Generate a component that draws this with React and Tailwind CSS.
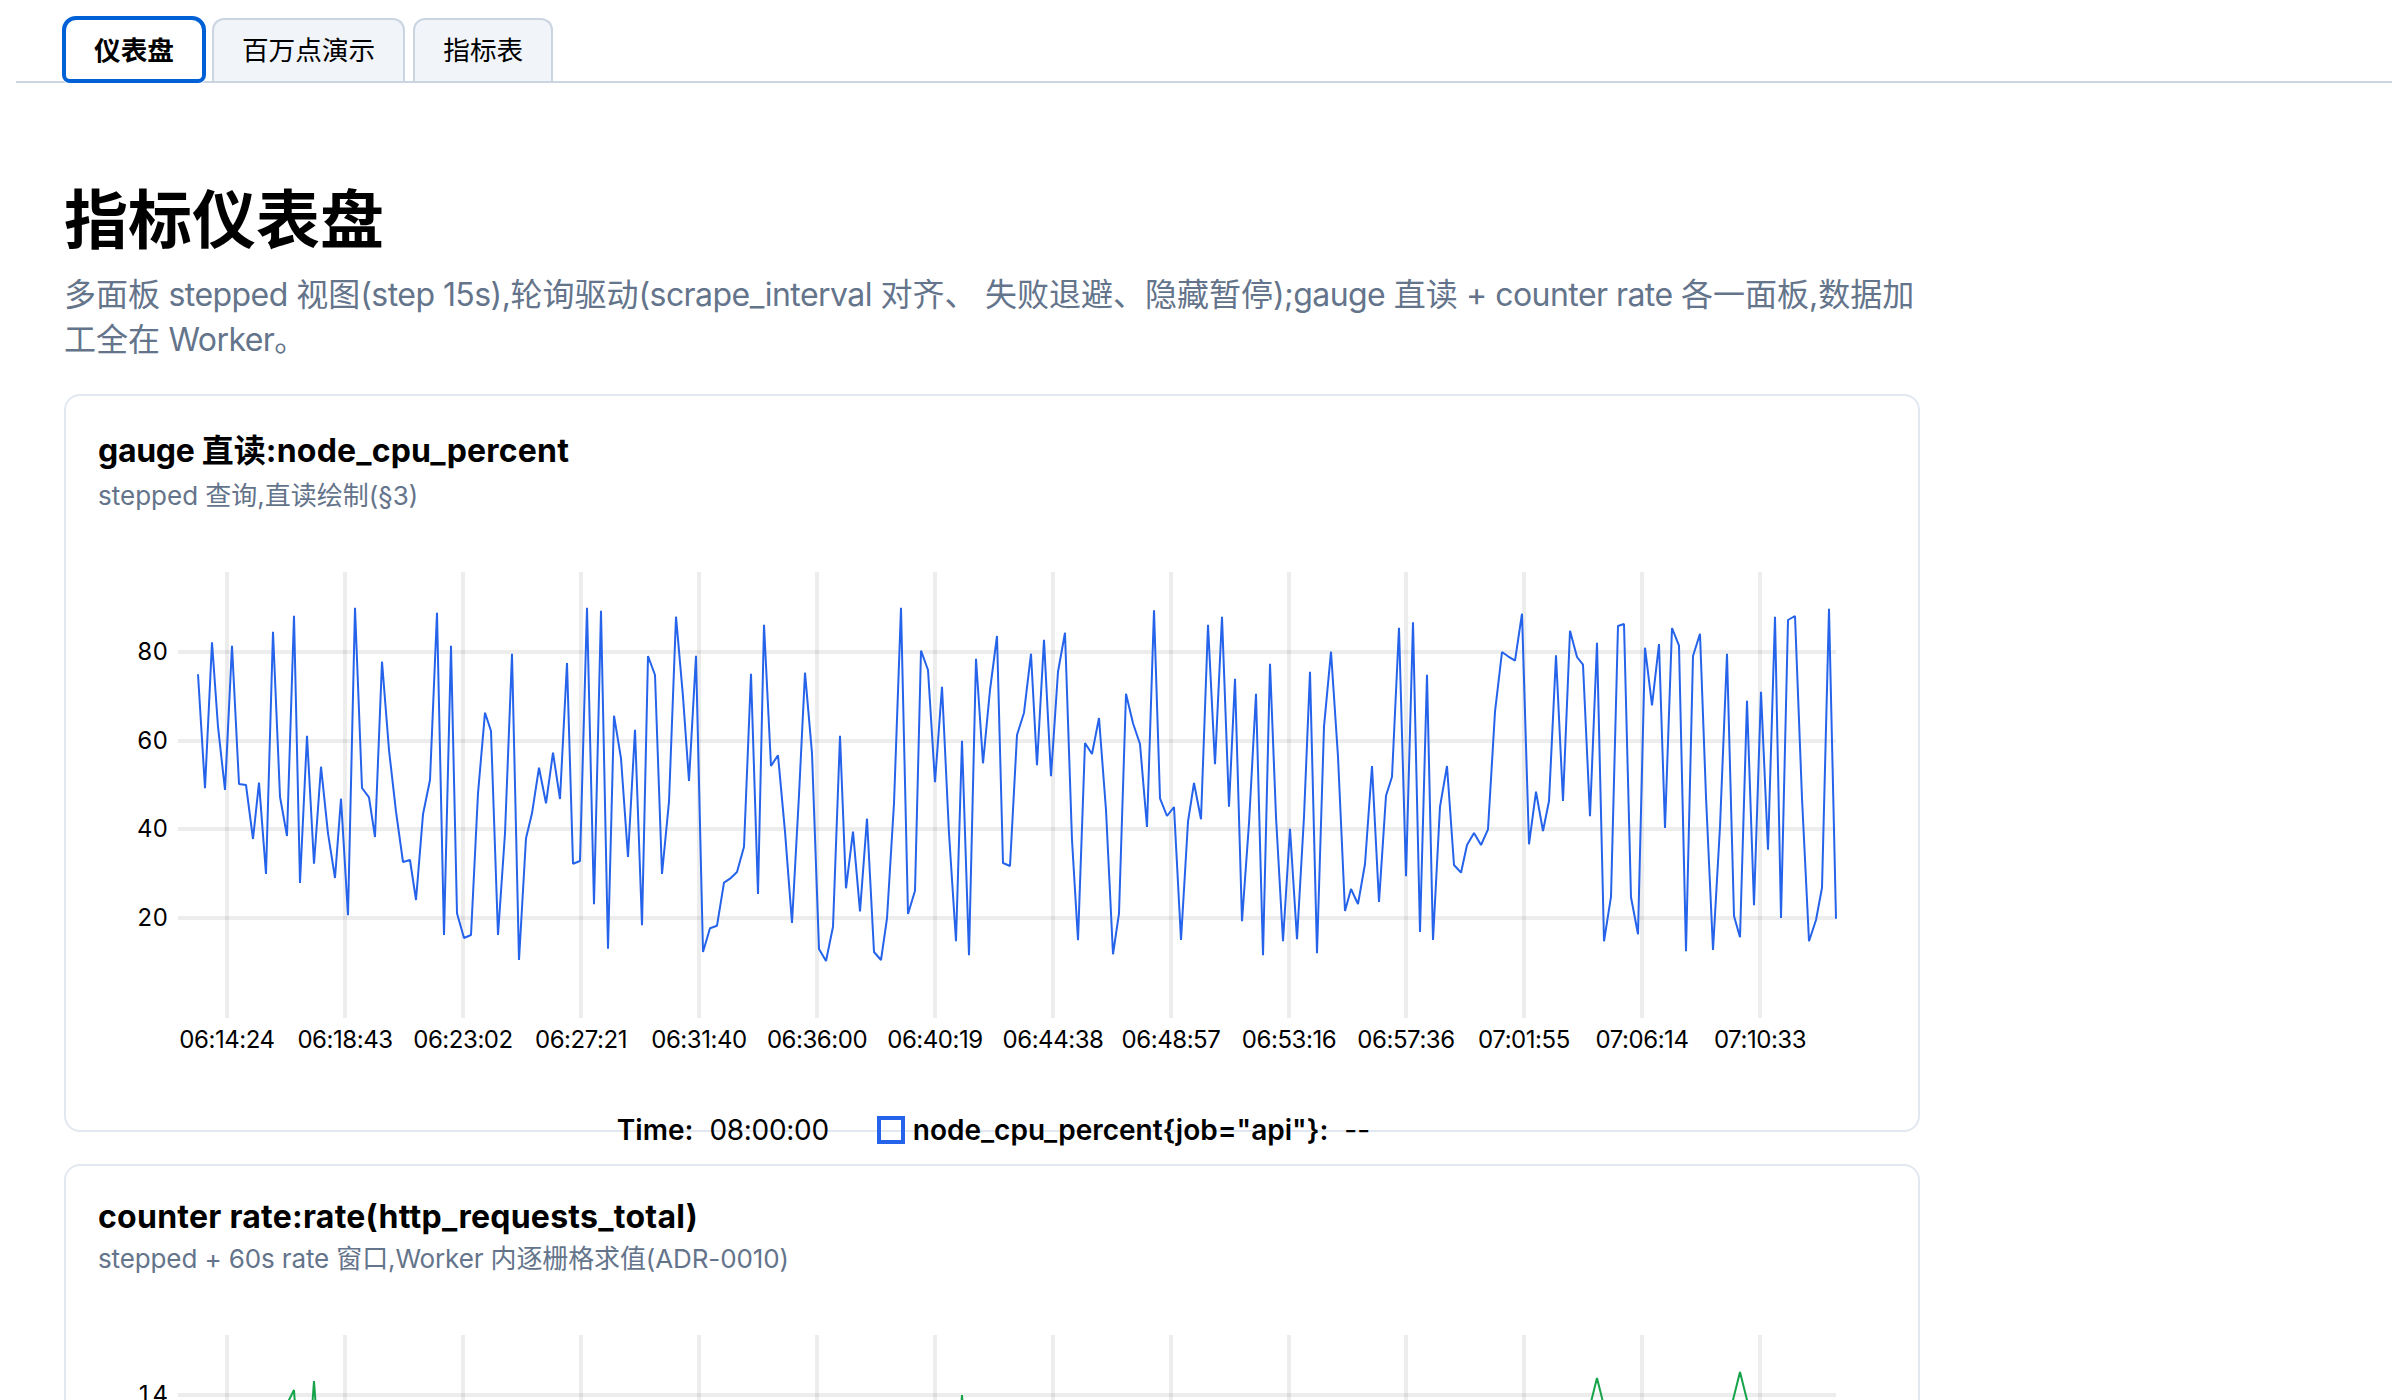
import { useState } from "react"
import clsx from "clsx"

const TABS = ["仪表盘", "百万点演示", "指标表"]

const TIMES = [
  { x: 129, label: "06:14:24" },
  { x: 247, label: "06:18:43" },
  { x: 365, label: "06:23:02" },
  { x: 483, label: "06:27:21" },
  { x: 601, label: "06:31:40" },
  { x: 719, label: "06:36:00" },
  { x: 837, label: "06:40:19" },
  { x: 955, label: "06:44:38" },
  { x: 1073, label: "06:48:57" },
  { x: 1191, label: "06:53:16" },
  { x: 1308, label: "06:57:36" },
  { x: 1426, label: "07:01:55" },
  { x: 1544, label: "07:06:14" },
  { x: 1662, label: "07:10:33" },
]

// one sample per 15s step, in thirds of a pixel below the chart top
const GAUGE = [
  343, 685, 247, 500, 690, 257, 672, 675, 837, 668, 942, 215, 710, 828, 167, 969, 527, 911, 620, 820,
  954, 716, 1066, 143, 684, 712, 831, 305, 570, 755, 906, 900, 1020, 763, 660, 158, 1125, 257, 1060, 1134,
  1125, 700, 458, 513, 1125, 820, 281, 1200, 835, 760, 623, 730, 578, 717, 309, 911, 903, 143, 1033, 152,
  1166, 467, 595, 891, 509, 1096, 288, 345, 942, 725, 170, 410, 663, 287, 1176, 1105, 1097, 968, 956, 936,
  860, 341, 1002, 194, 618, 586, 815, 1089, 705, 338, 580, 1167, 1203, 1100, 527, 985, 815, 1054, 776, 1176,
  1200, 1075, 730, 143, 1062, 992, 272, 330, 667, 380, 820, 1144, 542, 1186, 296, 610, 390, 228, 909, 918,
  525, 458, 281, 616, 239, 649, 335, 218, 840, 1141, 549, 582, 474, 750, 1183, 1060, 401, 490, 552, 801,
  151, 715, 768, 741, 1140, 785, 669, 778, 194, 613, 170, 740, 356, 1084, 790, 401, 1186, 311, 770, 1144,
  806, 1138, 770, 335, 1180, 500, 275, 590, 1053, 987, 1032, 912, 618, 1026, 707, 650, 203, 949, 187, 1116,
  344, 1140, 740, 618, 915, 938, 855, 819, 855, 808, 455, 276, 289, 302, 161, 853, 695, 813, 723, 286,
  723, 212, 291, 314, 769, 248, 1144, 1010, 198, 192, 1012, 1123, 263, 436, 252, 804, 204, 257, 1174, 288,
  221, 710, 1170, 800, 281, 1068, 1132, 422, 1036, 395, 869, 170, 1074, 180, 168, 715, 1144, 1080, 983, 146,
  1076,
]

const gaugePoints = GAUGE.map((v, i) => `${Math.round(100 + i * 6.825)},${(46 + v / 3).toFixed(1)}`).join(" ")

const ratePoints =
  "182,150 189,127 196,113 202,200 209,201 216,104 223,201 230,260 850,260 857,210 864,118 871,210 878,260 " +
  "1485,260 1492,129 1499,101 1506,129 1513,260 1628,260 1635,123 1642,95 1649,123 1656,260"

const Chart = ({ points, color, rows }) => (
  <svg className="block h-[584px] w-[1788px] shrink-0" viewBox="0 0 1788 584">
    <g stroke="#000" strokeOpacity="0.07" strokeWidth="4">
      {TIMES.map((t) => (
        <line key={t.label} x1={t.x} x2={t.x} y1="58" y2="504" />
      ))}
      {rows.map((r) => (
        <line key={r.label} x1="80" x2="1738" y1={r.y} y2={r.y} />
      ))}
    </g>
    <polyline points={points} fill="none" stroke={color} strokeWidth="2" strokeLinejoin="bevel" />
    <g className="text-[24px] tabular-nums" fill="#000">
      {rows.map((r) => (
        <text key={r.label} x="70" y={r.y + 8} textAnchor="end">
          {r.label}
        </text>
      ))}
    </g>
    <g className="text-[24px] tracking-[-0.45px]" fill="#000">
      {TIMES.map((t) => (
        <text key={t.label} x={t.x} y="534" textAnchor="middle">
          {t.label}
        </text>
      ))}
    </g>
  </svg>
)

const Panel = ({ title, subtitle, legend, children }) => (
  <section className="flex h-[738px] flex-col rounded-2xl border-2 border-[#e2e8f0] px-8 pt-8">
    {title}
    {subtitle}
    {children}
    {legend}
  </section>
)

// latin runs sit a little tighter than the CJK text around them
const Latin = ({ children }) => <span className="tracking-[-0.55px]">{children}</span>

const App = () => {
  const [active, setActive] = useState(0)

  return (
    <div className="h-[1400px] overflow-hidden bg-white pl-4 font-['Inter','Noto_Sans_CJK_SC',sans-serif] text-black">
      {/* Tabs */}
      <nav className="flex h-[83px] items-stretch gap-2 border-b-2 border-[#cbd5e1] pt-[18px] pl-12">
        {TABS.map((tab, i) => (
          <button
            key={tab}
            onClick={() => setActive(i)}
            className={clsx(
              "rounded-t-xl border-2 border-b-0 px-7 pb-0.5 text-[26.67px] leading-[38px] whitespace-nowrap",
              i === active
                ? "z-10 rounded-b-md border-transparent bg-white font-semibold ring-[3px] ring-white outline-4 -outline-offset-2 outline-[#0060d6]"
                : "border-[#cbd5e1] bg-[#f1f5f9]"
            )}
          >
            {tab}
          </button>
        ))}
      </nav>

      <main className="ml-12 w-[1856px] pt-[92px]">
        {/* Page heading */}
        <h1 className="text-[64px] leading-[90px] font-bold">指标仪表盘</h1>
        <p className="mt-[7px] text-[32px] leading-[45px] whitespace-nowrap text-[#64748b]">
          多面板<Latin> stepped </Latin>视图<Latin>(step 15s),</Latin>轮询驱动<Latin>(scrape_interval </Latin>
          对齐、<Latin> </Latin>失败退避、隐藏暂停<Latin>);gauge </Latin>直读<Latin> + counter rate </Latin>
          各一面板,数据加
          <br />
          工全在<Latin> Worker</Latin>。
        </p>

        {/* Panels */}
        <div className="mt-8 flex flex-col gap-8">
          <Panel
            title={
              <h2 className="text-[32px] leading-[45px] font-bold">
                <span className="tracking-[-0.3px]">gauge </span>直读
                <span className="tracking-[0.2px]">:node_cpu_percent</span>
              </h2>
            }
            subtitle={<p className="mt-1 text-[26px] leading-[37px] text-[#64748b]">stepped 查询,直读绘制(§3)</p>}
            legend={
              <div className="flex h-16 shrink-0 items-center justify-center pl-[3px] text-[28px] whitespace-nowrap">
                <b className="font-semibold">Time:</b>
                <span className="ml-4 tracking-[-0.3px]">08:00:00</span>
                <span className="ml-12 size-7 border-4 border-[#2563eb]" />
                <b className="ml-2 font-semibold">node_cpu_percent{'{job="api"}'}:</b>
                <span className="ml-4">--</span>
              </div>
            }
          >
            <Chart
              points={gaugePoints}
              color="#2563eb"
              rows={[
                { y: 138, label: "80" },
                { y: 227, label: "60" },
                { y: 315, label: "40" },
                { y: 404, label: "20" },
              ]}
            />
          </Panel>
          <Panel
            title={
              <h2 className="text-[32px] leading-[38px] font-bold tracking-[0.25px]">
                counter rate:rate(http_requests_total)
              </h2>
            }
            subtitle={
              <p className="mt-1 text-[26px] leading-[37px] tracking-[-0.12px] text-[#64748b]">
                stepped + 60s rate 窗口,Worker 内逐栅格求值(ADR-0010)
              </p>
            }
          >
            <Chart points={ratePoints} color="#16a34a" rows={[{ y: 118, label: "14" }]} />
          </Panel>
        </div>
      </main>
    </div>
  )
}

export default App
